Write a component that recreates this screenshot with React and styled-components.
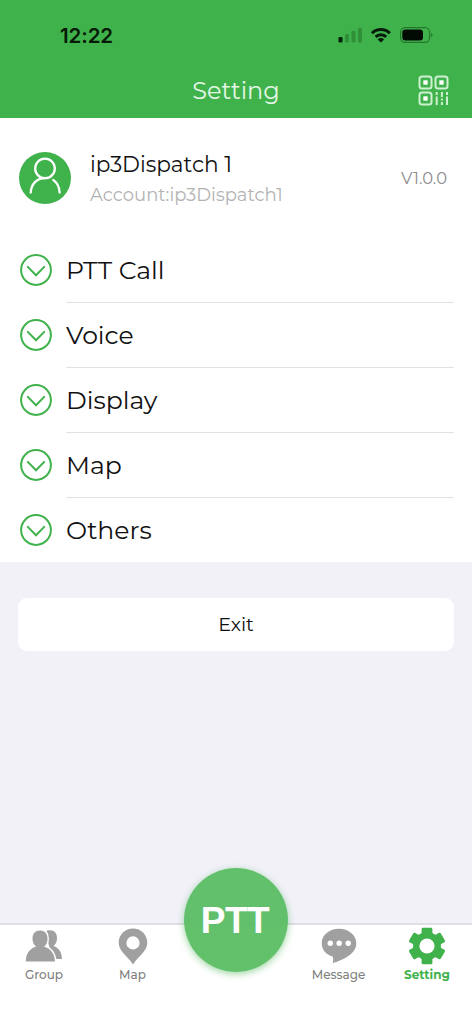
import React from 'react';
import styled, { createGlobalStyle } from 'styled-components';

const GREEN = '#40b24c';

const GlobalStyle = createGlobalStyle`
  * {
    box-sizing: border-box;
  }
  body {
    margin: 0;
    background-color: #f2f1f8;
    font-family: Montserrat, Inter, sans-serif;
  }
  svg {
    display: block;
    flex: none;
  }
`;

const Screen = styled.div`
  display: flex;
  flex-direction: column;
  width: 472px;
  height: 1024px;
  overflow: hidden;
  background-color: #f2f1f8;
`;

const Header = styled.header`
  flex: none;
  height: 118px;
  background-color: ${GREEN};
`;

const StatusBar = styled.div`
  display: flex;
  justify-content: space-between;
  align-items: center;
  height: 70px;
  padding: 0 39px 0 60px;
`;

const Time = styled.span`
  color: #061a08;
  font-family: Inter, sans-serif;
  font-size: 20.5px;
  font-weight: 600;
  letter-spacing: -0.1px;
`;

const TitleBar = styled.div`
  display: grid;
  grid-template-columns: 54px 1fr 54px;
  align-items: center;
  height: 40px;
`;

const Title = styled.h1`
  margin: 0;
  color: #e4f7e5;
  text-align: center;
  font-size: 24px;
  font-weight: 400;
`;

const Profile = styled.section`
  display: flex;
  flex: none;
  align-items: center;
  height: 120px;
  padding: 0 25px 0 19px;
  background-color: #fff;
`;

const ProfileText = styled.div`
  flex: 1;
  margin: 5px 0 0 19px;
`;

const Name = styled.div`
  color: #111;
  font-size: 21.6px;
  line-height: 29px;
`;

const Account = styled.div`
  color: #b3b3b3;
  font-size: 18px;
  line-height: 32px;
`;

const Version = styled.div`
  color: #8c8c8c;
  font-size: 16.4px;
`;

const Menu = styled.ul`
  flex: none;
  height: 324px;
  margin: 0;
  padding: 0 18px 0 20px;
  background-color: #fff;
  list-style: none;
`;

const MenuItem = styled.li`
  display: flex;
  align-items: center;
  height: 65px;
  gap: 14px;
  > svg {
    margin-bottom: 2px;
  }
`;

const MenuLabel = styled.span`
  display: flex;
  flex: 1;
  align-items: center;
  height: 65px;
  border-bottom: 1px solid #e2e2e3;
  color: #111;
  font-size: 25.1px;
  ${MenuItem}:last-child & {
    border-bottom-color: transparent;
  }
`;

const ExitButton = styled.button`
  flex: none;
  height: 53px;
  margin: 36px 18px 0;
  padding: 0 0 2px;
  border: 0;
  border-radius: 9px;
  background-color: #fff;
  color: #111;
  font-family: inherit;
  font-size: 19.2px;
`;

const TabBar = styled.nav`
  position: relative;
  display: grid;
  grid-template-columns: 88px 89px 118px 87px 90px;
  flex: none;
  height: 101px;
  margin-top: auto;
  border-top: 2px solid #e0dfe6;
  background-color: #fff;
`;

const Tab = styled.a`
  display: flex;
  flex-direction: column;
  align-items: center;
  padding-top: 2px;
  color: ${props => props.$active ? GREEN : '#7f7f7f'};
  font-size: 12px;
  font-weight: ${props => props.$active ? 700 : 500};
  line-height: 20px;
`;

const TabIcon = styled.div`
  display: flex;
  align-items: center;
  justify-content: center;
  height: 38px;
  color: ${props => props.$active ? GREEN : '#a0a0a0'};
`;

const PttButton = styled.button`
  position: absolute;
  top: -57px;
  left: 184px;
  width: 104px;
  height: 104px;
  padding: 2px 2px 0 0;
  border: 0;
  border-radius: 50%;
  background-color: rgba(83, 187, 93, 0.91);
  box-shadow: 0 2px 7px rgba(64, 178, 76, 0.5);
  color: #fff;
  font-family: 'Liberation Sans', sans-serif;
  font-size: 37px;
  font-weight: 700;
  letter-spacing: -0.5px;
  font-kerning: none;
`;

const StatusIcons = () => (
  <svg width="95" height="20" viewBox="338 25 95 20">
    <rect x="338.5" y="37" width="4" height="5.5" rx="1.2" fill="#06200a" />
    <g fill="#2f9039">
      <rect x="345" y="34" width="4" height="8.5" rx="1" />
      <rect x="351.5" y="31" width="4" height="11.5" rx="1" />
      <rect x="358" y="28" width="4" height="14.5" rx="1" />
    </g>
    <g fill="none" stroke="#051a08" strokeWidth="3">
      <path d="M372 33.2a12.6 12.6 0 0 1 17.8 0" />
      <path d="M375.6 36.9a7.6 7.6 0 0 1 10.6 0" />
    </g>
    <path d="M377.7 39.4a4.5 4.5 0 0 1 6.4 0l-3.2 3.2z" fill="#051a08" />
    <rect x="400.6" y="27.6" width="29" height="14.8" rx="4.6" fill="none" stroke="#23752c" strokeWidth="1.2" />
    <rect x="402.3" y="29.5" width="20.7" height="11" rx="3.2" fill="#020b03" />
    <path d="M431.2 32.7c1.7.6 1.7 4 0 4.6z" fill="#23752c" />
  </svg>
);

const QrIcon = () => (
  <svg width="31" height="31" viewBox="0 0 31 31" fill="none" stroke="#cdf1d0" strokeWidth="2">
    <rect x="1.5" y="1.5" width="12" height="12" rx="2.5" />
    <rect x="17.5" y="1.5" width="12" height="12" rx="2.5" />
    <rect x="1.5" y="17.5" width="12" height="12" rx="2.5" />
    <g fill="#fff" stroke="none">
      <rect x="5.3" y="5.3" width="4.4" height="4.4" />
      <rect x="21.3" y="5.3" width="4.4" height="4.4" />
      <rect x="5.3" y="21.3" width="4.4" height="4.4" />
    </g>
    <path d="M18.7 17v3M18.7 21.5v8.5M23.9 17v5M23.9 23.5v2M23.9 27v3M29 17v3M29 21.5v8.5" />
  </svg>
);

const AvatarIcon = () => (
  <svg width="52" height="52" viewBox="0 0 52 52">
    <circle cx="26" cy="26" r="26" fill={GREEN} />
    <g fill="none" stroke="#fff" strokeWidth="2.3" strokeLinecap="round">
      <circle cx="26" cy="16.4" r="9.8" />
      <path d="M11.7 40.5c.5-8 5.5-14.3 14.3-14.3M34.3 28c3.8 2.5 6 7 6.3 12.5" />
    </g>
  </svg>
);

const ChevronIcon = () => (
  <svg width="32" height="32" viewBox="0 0 32 32" fill="none" stroke={GREEN} strokeWidth="2">
    <circle cx="16" cy="16" r="14.9" />
    <path d="M7.8 12.9l8.2 8.4 8.2-8.4" strokeLinecap="round" />
  </svg>
);

const GroupIcon = () => (
  <svg width="38" height="34" viewBox="0 0 38 34" fill="currentColor">
    <path d="M20 3c1.5-1.5 3-1.8 5-1.8 4.5 0 7 3 7 7.8 0 4-1.2 6.2-3.5 8 5 1.8 8.2 5.5 8.5 13H28z" />
    <path
      d="M15 1.5c-4.8 0-7.5 3-7.5 8 0 4 1.3 6.5 3.8 8C5 19.5 1 24 .8 32.5h29.2C29.8 24.5 25.5 19.5 19 17.5c2.5-1.5 3.5-4 3.5-8 0-5-2.7-8-7.5-8z"
      stroke="#fff"
      strokeWidth="2.8"
      paintOrder="stroke"
    />
  </svg>
);

const PinIcon = () => (
  <svg width="30" height="37" viewBox="0 0 30 37" fill="currentColor" fillRule="evenodd">
    <path d="M15 .5C7 .5.7 6.8.7 14.5c0 9 8.500 13 14.300 22 5.800-9 14.300-13 14.300-22C29.300 6.800 23 .5 15 .5zM15 8.300a6.600 6.600 0 1 1 0 13.200 6.600 6.600 0 0 1 0-13.200z" />
  </svg>
);

const MessageIcon = () => (
  <svg width="36" height="36" viewBox="0 0 36 36">
    <path d="M18 .8C8.5.8.7 7 .7 15.2c0 6.500 4.300 11.500 11 13.200.6 2.500.7 4.200 0 6.800C21 32 35.300 26.500 35.300 15.200 35.300 7 27.500.8 18 .8z" fill="currentColor" />
    <g fill="#fff">
      <circle cx="9.3" cy="15.2" r="2.7" />
      <circle cx="18.2" cy="15.2" r="2.7" />
      <circle cx="27.2" cy="15.2" r="2.7" />
    </g>
  </svg>
);

const GearIcon = () => (
  <svg width="38" height="38" viewBox="-19 -19 38 38">
    <g fill="currentColor">
      <circle r="13.8" />
      {[0, 60, 120, 180, 240, 300].map(angle => (
        <path
          key={angle}
          transform={`rotate(${angle})`}
          d="M-7 -11L-5.4 -13.2V-17Q-5.3 -18.3 -4 -18.3H4Q5.3 -18.3 5.4 -17V-13.2L7 -11Z"
        />
      ))}
    </g>
    <circle r="7.6" fill="#fff" />
  </svg>
);

const menuItems = ['PTT Call', 'Voice', 'Display', 'Map', 'Others'];

const App = () => (
  <>
    <GlobalStyle />
    <Screen>
      <Header>
        <StatusBar>
          <Time>12:22</Time>
          <StatusIcons />
        </StatusBar>
        <TitleBar>
          <span />
          <Title>Setting</Title>
          <QrIcon />
        </TitleBar>
      </Header>
      <Profile>
        <AvatarIcon />
        <ProfileText>
          <Name>ip3Dispatch 1</Name>
          <Account>Account:ip3Dispatch1</Account>
        </ProfileText>
        <Version>V1.0.0</Version>
      </Profile>
      <Menu>
        {menuItems.map(label => (
          <MenuItem key={label}>
            <ChevronIcon />
            <MenuLabel>{label}</MenuLabel>
          </MenuItem>
        ))}
      </Menu>
      <ExitButton>Exit</ExitButton>
      <TabBar>
        <Tab>
          <TabIcon><GroupIcon /></TabIcon>
          Group
        </Tab>
        <Tab>
          <TabIcon><PinIcon /></TabIcon>
          Map
        </Tab>
        <span />
        <Tab>
          <TabIcon><MessageIcon /></TabIcon>
          Message
        </Tab>
        <Tab $active>
          <TabIcon $active><GearIcon /></TabIcon>
          Setting
        </Tab>
        <PttButton>PTT</PttButton>
      </TabBar>
    </Screen>
  </>
);

export default App;
